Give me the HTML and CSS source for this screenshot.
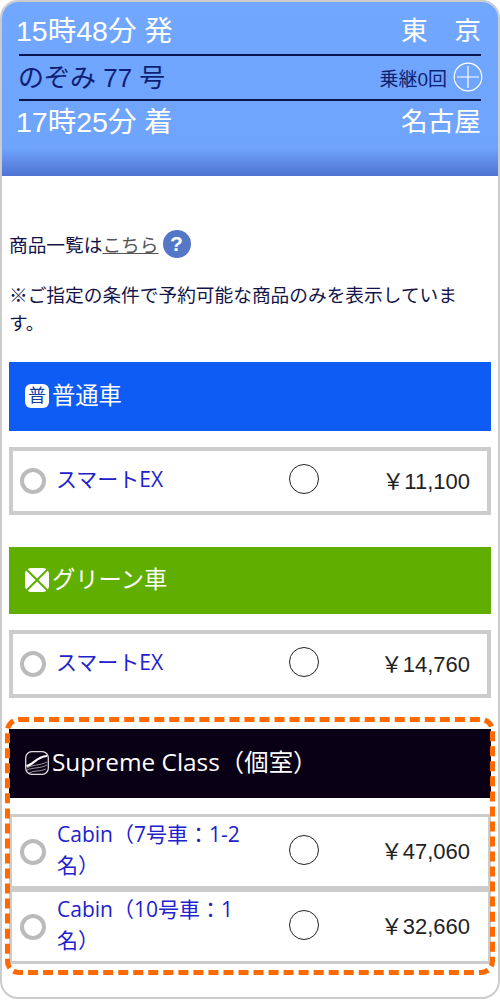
FILE: index.html
```html
<!DOCTYPE html>
<html lang="ja">
<head>
<meta charset="utf-8">
<title>商品選択</title>
<link rel="stylesheet" href="styles.css">
</head>
<body>
<div class="frame">
  <header class="train">
    <div class="train-row t-time"><span class="t-clock">15時48分 発</span><span>東　京</span></div>
    <div class="train-row t-name">
      <span class="t-train">のぞみ 77 号</span>
      <span class="t-transfer">乗継0回
        <svg class="plus" viewBox="0 0 30 30"><circle cx="15" cy="15" r="13.8" fill="none" stroke="#fff" stroke-width="1.2"/><path d="M15 4V26M4 15H26" stroke="#fff" stroke-width="1.2"/></svg>
      </span>
    </div>
    <div class="train-row t-time t-last"><span class="t-clock">17時25分 着</span><span>名古屋</span></div>
  </header>
  <main class="content">
    <p class="list-link">商品一覧は<a class="here">こちら</a><span class="help">?</span></p>
    <p class="note">※ご指定の条件で予約可能な商品のみを表示しています。</p>

    <h2 class="car car-blue"><span class="car-icon">普</span>普通車</h2>
    <div class="fare">
      <span class="radio"></span><span class="fare-name">スマートEX</span><span class="avail"></span><span class="price">￥11,100</span>
    </div>

    <h2 class="car car-green gap-top">
      <svg class="car-svg" viewBox="0 0 24 24"><rect width="24" height="24" rx="6" fill="#fff"/><path d="M1.5 1.5L22.5 22.5M22.5 1.5L1.5 22.5" stroke="#5fae00" stroke-width="2"/></svg>グリーン車</h2>
    <div class="fare">
      <span class="radio"></span><span class="fare-name">スマートEX</span><span class="avail"></span><span class="price">￥14,760</span>
    </div>

    <section class="supreme">
      <h2 class="car car-dark">
        <svg class="car-svg" viewBox="0 0 24 24"><rect x=".7" y=".7" width="22.6" height="22.6" rx="6" fill="none" stroke="#ddd" stroke-width="1.3"/><path d="M1.5 15C8 14 11 6 22 5" fill="none" stroke="#fff" stroke-width="2.2"/><path d="M2 17C9 13 14 15 22 11M2 19C9 16 14 18 22 14M4 22C9 19 15 21 21 18" fill="none" stroke="#bbb" stroke-width=".8"/></svg>Supreme Class（個室）</h2>
      <div class="fare fare-cabin">
        <span class="radio"></span><span class="fare-name">Cabin（7号車：1-2名）</span><span class="avail"></span><span class="price">￥47,060</span>
      </div>
      <div class="fare fare-cabin">
        <span class="radio"></span><span class="fare-name">Cabin（10号車：1名）</span><span class="avail"></span><span class="price">￥32,660</span>
      </div>
    </section>
  </main>
</div>
</body>
</html>
```
FILE: styles.css
```css
* { box-sizing: border-box; }
html, body { margin: 0; padding: 0; background: #fff; }
body {
  font-family: "Liberation Sans", "Noto Sans CJK JP", sans-serif;
  color: #14144a;
}
.frame {
  width: 500px;
  height: 999px;
  border: 2px solid #ccc;
  border-radius: 18px;
  overflow: hidden;
}
.train {
  height: 174px;
  padding: 6px 17px 0;
  background: linear-gradient(to bottom, #72a7ff 0, #6fa4fd 146px, #4f73d2 174px);
  color: #fff;
}
.train-row {
  display: flex;
  justify-content: space-between;
  align-items: center;
  font-size: 26.7px;
}
.t-clock { margin-left: -3px; font-size: 28.5px; }
.t-time { height: 48px; padding-bottom: 6px; border-bottom: 2px solid #0a1450; }
.t-last { border-bottom: 0; height: 44px; padding-bottom: 8px; }
.t-name { height: 45px; border-bottom: 2px solid #0a1450; color: #0f1f73; font-size: 26px; }
.t-train { margin-left: -1px; padding-bottom: 4px; }
.t-transfer { display: flex; align-items: center; gap: 6px; font-size: 19px; margin-right: -2px; padding-bottom: 1px; }
.plus { width: 30px; height: 30px; }
.content { padding: 54px 7px 0; }
.list-link {
  display: flex;
  align-items: center;
  height: 28px;
  margin: 0;
  padding-bottom: 2px;
  font-size: 18.7px;
}
.here { color: #555; text-decoration: underline; }
.help {
  align-self: flex-start;
  width: 28px;
  height: 28px;
  margin-left: 4px;
  border-radius: 50%;
  background: #5577c8;
  color: #fff;
  font-size: 21px;
  font-weight: 700;
  line-height: 28px;
  text-align: center;
}
.note {
  margin: 24px 0;
  font-size: 18.7px;
  line-height: 28px;
}
.car {
  display: flex;
  align-items: center;
  gap: 3px;
  height: 69px;
  margin: 0;
  padding: 0 0 6px 16px;
  color: #fff;
  font-size: 23.3px;
  font-weight: 400;
}
.car-blue { background: #0f5cf5; }
.car-green { background: #5fae00; height: 67px; }
.car-dark {
  background: #0a0015;
  font-family: "Open Sans", "Noto Sans CJK JP", sans-serif;
  font-size: 24.4px;
}
.gap-top { margin-top: 32px; }
.car-icon {
  width: 24px;
  height: 24px;
  margin-top: 4px;
  border-radius: 6px;
  background: #fff;
  color: #0f3fa0;
  font-size: 18px;
  line-height: 24px;
  text-align: center;
}
.car-svg { width: 24px; height: 24px; flex: none; margin-top: 4px; }
.fare {
  display: flex;
  align-items: center;
  height: 68px;
  margin-top: 16px;
  padding-left: 7px;
  border: 4px solid #ccc;
}
.radio {
  width: 26px;
  height: 26px;
  flex: none;
  border: 4px solid #bbb;
  border-radius: 50%;
}
.fare-name {
  width: 190px;
  margin-left: 10px;
  padding-bottom: 4px;
  color: #2222cc;
  font-family: "Open Sans", "Noto Sans CJK JP", sans-serif;
  font-size: 21px;
  line-height: 31px;
}
.avail {
  width: 30px;
  height: 30px;
  flex: none;
  margin: 0 0 4px 43px;
  border: 1.3px solid #222;
  border-radius: 50%;
}
.price {
  flex: 1;
  padding: 0 17px 5px 0;
  color: #222;
  font-size: 22px;
  text-align: right;
  white-space: nowrap;
}
.supreme {
  position: relative;
  margin-top: 31px;
}
.supreme::after {
  content: "";
  position: absolute;
  inset: -12px -4px -11px;
  border: 5px dashed #ff6a00;
  border-radius: 14px;
  pointer-events: none;
}
.fare-cabin {
  height: 75px;
  margin: 0;
  padding-left: 8px;
  border-width: 3px;
}
.fare-cabin .fare-name { margin-left: 11px; }
.fare-cabin .avail { margin-left: 42px; }
.fare-cabin .price { padding-right: 18px; }
.car-dark + .fare-cabin { margin-top: 16px; }
```
